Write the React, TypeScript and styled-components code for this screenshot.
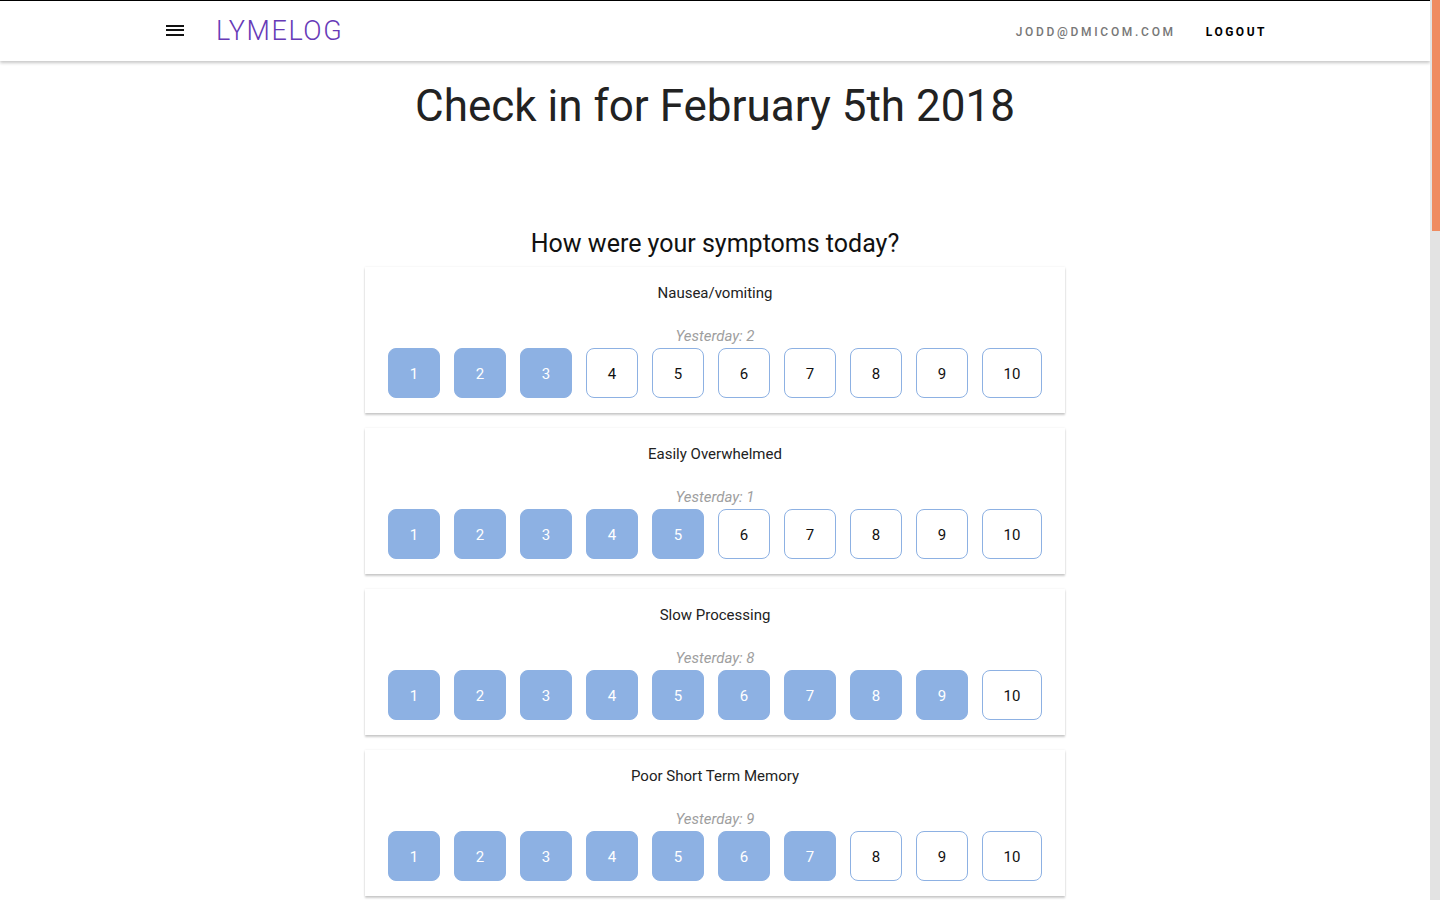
import React from "react";
import styled, { createGlobalStyle } from "styled-components";

const GlobalStyle = createGlobalStyle`
  html, body {
    margin: 0;
    padding: 0;
    background: #ffffff;
    font-family: Roboto, "Noto Sans", Arial, sans-serif;
    overflow: hidden;
  }
`;

const Frame = styled.div`
  display: flex;
  height: 100vh;
  overflow: hidden;
`;

const Viewport = styled.div`
  flex: 1;
  min-width: 0;
  height: 100%;
  overflow: hidden;
  display: flex;
  flex-direction: column;
`;

const ScrollTrack = styled.div`
  width: 10px;
  flex: none;
  box-sizing: border-box;
  padding-left: 2px;
  background: #e3e3e3;
`;

const ScrollThumb = styled.div`
  height: 231px;
  background: #ef8b60;
`;

const NavBar = styled.header`
  flex: none;
  height: 60px;
  border-top: 1px solid #000;
  background: #fff;
  box-shadow: 0 2px 3px rgba(0, 0, 0, 0.22);
  display: flex;
  justify-content: center;
  position: relative;
  z-index: 2;
`;

const NavInner = styled.div`
  width: 1100px;
  display: flex;
  align-items: center;
`;

const MenuButton = styled.button`
  border: none;
  background: none;
  padding: 0;
  width: 18px;
  height: 20px;
  margin-left: 1px;
  display: flex;
  flex-direction: column;
  justify-content: center;
  gap: 2.5px;
  margin-top: -2px;
  cursor: pointer;
`;

const MenuLine = styled.span`
  display: block;
  width: 18px;
  height: 2px;
  background: #111;
`;

const Logo = styled.div`
  margin-left: 32px;
  margin-top: -1px;
  font-size: 27px;
  font-weight: 300;
  letter-spacing: 1.6px;
  color: #673ab7;
`;

const NavRight = styled.nav`
  margin-left: auto;
  display: flex;
  align-items: center;
  gap: 30px;
  margin-top: 1px;
`;

const NavLink = styled.a<{ $strong?: boolean }>`
  font-size: 12px;
  font-weight: ${(p) => (p.$strong ? 700 : 500)};
  letter-spacing: ${(p) => (p.$strong ? "2.5px" : "2.7px")};
  color: ${(p) => (p.$strong ? "#000" : "#777")};
  text-transform: uppercase;
  text-decoration: none;
  margin-right: ${(p) => (p.$strong ? "-2px" : "0")};
`;

const Main = styled.main`
  display: flex;
  flex-direction: column;
  align-items: center;
`;

const Title = styled.h1`
  margin: 17px 0 0;
  font-size: 44px;
  font-weight: 400;
  line-height: 56px;
  color: #222;
`;

const SubTitle = styled.h2`
  margin: 94px 0 0;
  font-size: 25px;
  font-weight: 400;
  line-height: 32px;
  color: #111;
`;

const CardList = styled.div`
  margin-top: 7px;
  display: flex;
  flex-direction: column;
  gap: 15px;
`;

const Card = styled.section`
  width: 700px;
  box-sizing: border-box;
  padding: 16px 23px 15px;
  background: #fff;
  box-shadow: 0 2px 2px rgba(0, 0, 0, 0.2), 0 0 2px rgba(0, 0, 0, 0.08);
  display: flex;
  flex-direction: column;
  align-items: center;
`;

const Label = styled.div`
  font-size: 15px;
  line-height: 20px;
  color: #222;
`;

const Yesterday = styled.div`
  margin-top: 23px;
  font-size: 15px;
  line-height: 20px;
  font-style: italic;
  color: #9e9e9e;
`;

const ButtonRow = styled.div`
  margin-top: 2px;
  width: 100%;
  display: flex;
  justify-content: space-between;
`;

const ScoreButton = styled.button<{ $filled: boolean; $wide?: boolean }>`
  width: ${(p) => (p.$wide ? "60px" : "52px")};
  height: 50px;
  box-sizing: border-box;
  border-radius: 8px;
  border: 1px solid #8db1e3;
  background: ${(p) => (p.$filled ? "#8db1e3" : "#fff")};
  color: ${(p) => (p.$filled ? "#fff" : "#111")};
  font-family: Roboto, Arial, sans-serif;
  font-size: 15px;
  padding: 2px 0 0;
  cursor: pointer;
`;

const symptoms: { name: string; yesterday: number; value: number }[] = [
  { name: "Nausea/vomiting", yesterday: 2, value: 3 },
  { name: "Easily Overwhelmed", yesterday: 1, value: 5 },
  { name: "Slow Processing", yesterday: 8, value: 9 },
  { name: "Poor Short Term Memory", yesterday: 9, value: 7 },
];

export default function App() {
  return (
    <Frame>
      <GlobalStyle />
      <Viewport>
        <NavBar>
          <NavInner>
            <MenuButton aria-label="menu">
              <MenuLine />
              <MenuLine />
              <MenuLine />
            </MenuButton>
            <Logo>LYMELOG</Logo>
            <NavRight>
              <NavLink href="#">jodd@dmicom.com</NavLink>
              <NavLink href="#" $strong>
                Logout
              </NavLink>
            </NavRight>
          </NavInner>
        </NavBar>
        <Main>
          <Title>Check in for February 5th 2018</Title>
          <SubTitle>How were your symptoms today?</SubTitle>
          <CardList>
            {symptoms.map((s) => (
              <Card key={s.name}>
                <Label>{s.name}</Label>
                <Yesterday>Yesterday: {s.yesterday}</Yesterday>
                <ButtonRow>
                  {Array.from({ length: 10 }, (_, i) => i + 1).map((n) => (
                    <ScoreButton key={n} $filled={n <= s.value} $wide={n === 10}>
                      {n}
                    </ScoreButton>
                  ))}
                </ButtonRow>
              </Card>
            ))}
          </CardList>
        </Main>
      </Viewport>
      <ScrollTrack>
        <ScrollThumb />
      </ScrollTrack>
    </Frame>
  );
}
